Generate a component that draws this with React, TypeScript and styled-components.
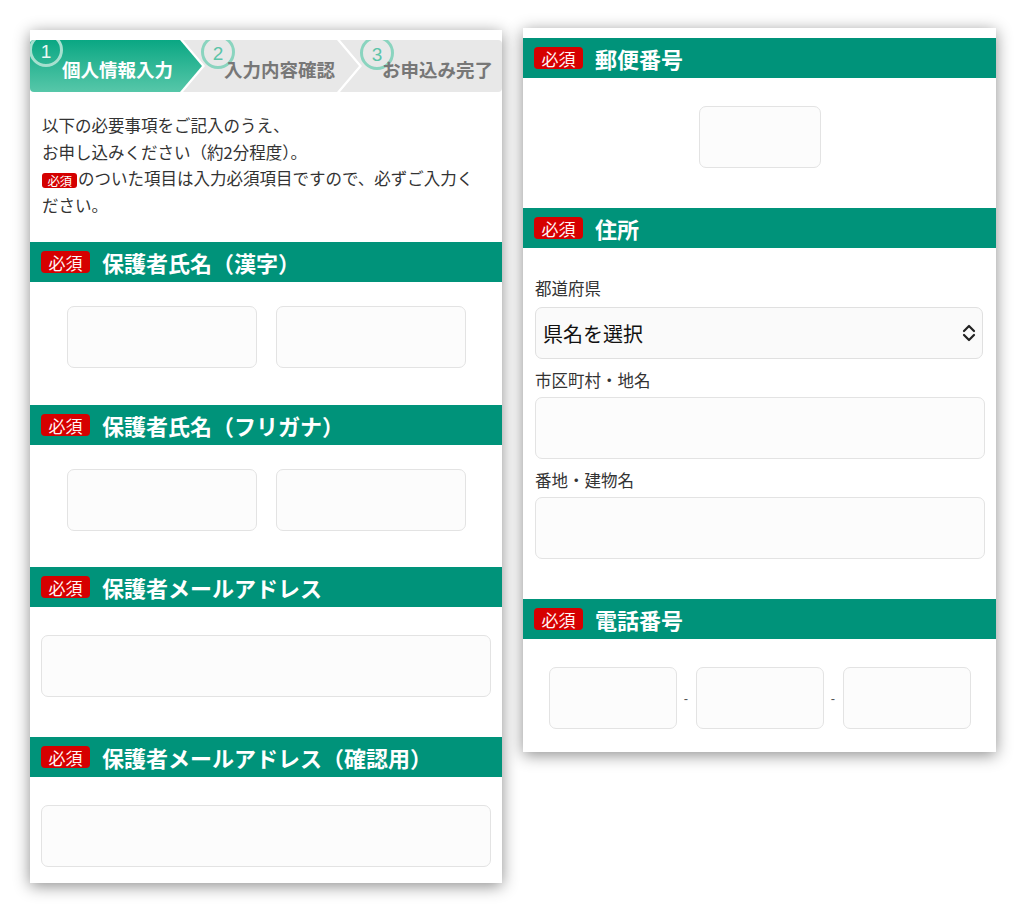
import React from "react";
import styled, { createGlobalStyle } from "styled-components";

const GlobalStyle = createGlobalStyle`
  html, body { margin: 0; padding: 0; background: #ffffff; }
  body { font-family: "Noto Sans CJK JP", "Noto Sans", sans-serif; color: #333; }
  * { box-sizing: border-box; }
`;

const Page = styled.div`
  display: flex;
  align-items: flex-start;
  gap: 21px;
  padding: 28px 0 0 30px;
  width: 1024px;
  height: 914px;
`;

const Panel = styled.div<{ $w: number; $mt?: number }>`
  width: ${(p) => p.$w}px;
  margin-top: ${(p) => p.$mt ?? 0}px;
  background: #fff;
  padding-top: 10px;
  box-shadow: 0 3px 15px rgba(0, 0, 0, 0.45);
  display: flex;
  flex-direction: column;
`;

/* ---------- step bar ---------- */
const StepBar = styled.div`
  display: flex;
  height: 52px;
  overflow: hidden;
  border-radius: 4px;
`;

type StepKind = "first" | "middle" | "last";

const clipFor = (k: StepKind) =>
  k === "first"
    ? "polygon(0 0, calc(100% - 22px) 0, 100% 50%, calc(100% - 22px) 100%, 0 100%)"
    : k === "middle"
    ? "polygon(0 0, calc(100% - 22px) 0, 100% 50%, calc(100% - 22px) 100%, 0 100%, 22px 50%)"
    : "polygon(0 0, 100% 0, 100% 100%, 0 100%, 22px 50%)";

const Step = styled.div<{ $kind: StepKind; $w?: number; $active?: boolean; $pl: number }>`
  position: relative;
  flex: ${(p) => (p.$w ? `0 0 ${p.$w}px` : "1 1 auto")};
  margin-left: ${(p) => (p.$kind === "first" ? 0 : -19)}px;
  clip-path: ${(p) => clipFor(p.$kind)};
  background: ${(p) =>
    p.$active ? "linear-gradient(180deg, #0aa783 0%, #57c7a9 100%)" : "#e8e8e8"};
  display: flex;
  align-items: center;
  padding: 5px 0 0 ${(p) => p.$pl}px;
`;

const StepLabel = styled.span<{ $active?: boolean }>`
  position: relative;
  font-size: 18.5px;
  font-weight: 700;
  white-space: nowrap;
  color: ${(p) => (p.$active ? "#ffffff" : "#777777")};
`;

const StepNum = styled.span<{ $x: number; $y: number; $active?: boolean }>`
  position: absolute;
  left: ${(p) => p.$x}px;
  top: ${(p) => p.$y}px;
  width: 34px;
  height: 34px;
  border-radius: 50%;
  border: 3px solid ${(p) => (p.$active ? "#a6e0cf" : "#8ad4bf")};
  display: flex;
  align-items: center;
  justify-content: center;
  padding-top: 4px;
  font-family: "Liberation Sans", sans-serif;
  font-size: 19px;
  font-weight: 400;
  color: ${(p) => (p.$active ? "#eaf8f3" : "#5cc4a8")};
`;

/* ---------- intro ---------- */
const Intro = styled.p`
  margin: 0;
  padding: 20px 12px 24px 12px;
  font-size: 16.5px;
  line-height: 26.5px;
  color: #333;
  white-space: nowrap;
`;

const InlineBadge = styled.span`
  display: inline-block;
  width: 35px;
  height: 15px;
  margin-right: 1px;
  vertical-align: -1px;
  border-radius: 3px;
  background: #d40000;
  color: #fff;
  font-size: 12.5px;
  line-height: 15px;
  text-align: center;
  letter-spacing: -0.5px;
`;

/* ---------- sections ---------- */
const SectionHead = styled.div`
  height: 40px;
  background: #00937a;
  display: flex;
  align-items: center;
  gap: 12px;
  padding-left: 11px;
`;

const Badge = styled.span`
  width: 49px;
  height: 22px;
  border-radius: 4px;
  background: #d60000;
  color: #fff4f4;
  font-size: 17px;
  display: flex;
  align-items: center;
  justify-content: center;
  line-height: 1;
`;

const HeadTitle = styled.h2`
  margin: 0;
  font-size: 22px;
  font-weight: 700;
  color: #fff;
  white-space: nowrap;
  line-height: 1;
`;

const SectionBody = styled.div<{ $top: number; $bottom: number }>`
  padding: ${(p) => p.$top}px 11px ${(p) => p.$bottom}px 11px;
`;

const CenterRow = styled.div`
  display: flex;
  align-items: center;
  justify-content: center;
`;

const PairRow = styled(CenterRow)`
  gap: 19px;
`;

const TextField = styled.input<{ $w?: number }>`
  display: block;
  width: ${(p) => (p.$w ? `${p.$w}px` : "100%")};
  height: 62px;
  border: 1.5px solid #e3e3e3;
  border-radius: 7px;
  background: #fcfcfc;
  padding: 0 10px;
  font-size: 18px;
  outline: none;
  flex: 0 0 auto;
`;

const Dash = styled.span`
  width: 19px;
  text-align: center;
  font-family: "Liberation Sans", sans-serif;
  font-size: 13px;
  color: #555;
`;

const AddressBody = styled.div`
  padding: 28px 11px 40px 12px;
  display: flex;
  flex-direction: column;
`;

const FieldLabel = styled.label<{ $mt: number; $mb: number }>`
  display: block;
  margin: ${(p) => p.$mt}px 0 ${(p) => p.$mb}px;
  font-size: 16.5px;
  line-height: 24px;
  color: #333;
`;

const SelectWrap = styled.div`
  position: relative;
  margin-right: 2px;
`;

const Select = styled.select`
  appearance: none;
  -webkit-appearance: none;
  display: block;
  width: 100%;
  height: 52px;
  border: 1.5px solid #e0e0e0;
  border-radius: 7px;
  background: #fafafa;
  padding: 0 30px 0 7px;
  font-family: "Noto Sans CJK JP", sans-serif;
  font-size: 20px;
  color: #111;
  outline: none;
`;

const SelectIcon = styled.svg`
  position: absolute;
  right: 7px;
  top: 50%;
  transform: translateY(-50%);
  width: 14px;
  height: 18px;
  pointer-events: none;
`;

const StepDef = [
  { kind: "first" as StepKind, w: 172, pl: 32, label: "個人情報入力", n: "1", x: -1, y: -7, active: true },
  { kind: "middle" as StepKind, w: 176, pl: 41, label: "入力内容確認", n: "2", x: 18, y: -5, active: false },
  { kind: "last" as StepKind, w: 0, pl: 42, label: "お申込み完了", n: "3", x: 20, y: -4, active: false },
];

function Head({ title }: { title: string }) {
  return (
    <SectionHead>
      <Badge>必須</Badge>
      <HeadTitle>{title}</HeadTitle>
    </SectionHead>
  );
}

export default function App() {
  return (
    <>
      <GlobalStyle />
      <Page>
        <Panel $w={472} $mt={2}>
          <StepBar>
            {StepDef.map((s) => (
              <Step key={s.n} $kind={s.kind} $w={s.w || undefined} $active={s.active} $pl={s.pl}>
                <StepNum $x={s.x} $y={s.y} $active={s.active}>
                  {s.n}
                </StepNum>
                <StepLabel $active={s.active}>{s.label}</StepLabel>
              </Step>
            ))}
          </StepBar>

          <Intro>
            以下の必要事項をご記入のうえ、
            <br />
            お申し込みください（約2分程度）。
            <br />
            <InlineBadge>必須</InlineBadge>
            のついた項目は入力必須項目ですので、必ずご入力く
            <br />
            ださい。
          </Intro>

          <Head title="保護者氏名（漢字）" />
          <SectionBody $top={24} $bottom={37}>
            <PairRow>
              <TextField $w={190} />
              <TextField $w={190} />
            </PairRow>
          </SectionBody>

          <Head title="保護者氏名（フリガナ）" />
          <SectionBody $top={24} $bottom={36}>
            <PairRow>
              <TextField $w={190} />
              <TextField $w={190} />
            </PairRow>
          </SectionBody>

          <Head title="保護者メールアドレス" />
          <SectionBody $top={28} $bottom={40}>
            <TextField />
          </SectionBody>

          <Head title="保護者メールアドレス（確認用）" />
          <SectionBody $top={28} $bottom={16}>
            <TextField />
          </SectionBody>
        </Panel>

        <Panel $w={473}>
          <Head title="郵便番号" />
          <SectionBody $top={28} $bottom={40}>
            <CenterRow>
              <TextField $w={122} />
            </CenterRow>
          </SectionBody>

          <Head title="住所" />
          <AddressBody>
            <FieldLabel $mt={0} $mb={7}>都道府県</FieldLabel>
            <SelectWrap>
              <Select defaultValue="">
                <option value="">県名を選択</option>
              </Select>
              <SelectIcon viewBox="0 0 14 18" fill="none" stroke="#222" strokeWidth="2.2" strokeLinecap="round" strokeLinejoin="round">
                <polyline points="2,7 7,2 12,7" />
                <polyline points="2,11 7,16 12,11" />
              </SelectIcon>
            </SelectWrap>
            <FieldLabel $mt={9} $mb={5}>市区町村・地名</FieldLabel>
            <TextField />
            <FieldLabel $mt={9} $mb={5}>番地・建物名</FieldLabel>
            <TextField />
          </AddressBody>

          <Head title="電話番号" />
          <SectionBody $top={28} $bottom={23}>
            <CenterRow>
              <TextField $w={128} />
              <Dash>-</Dash>
              <TextField $w={128} />
              <Dash>-</Dash>
              <TextField $w={128} />
            </CenterRow>
          </SectionBody>
        </Panel>
      </Page>
    </>
  );
}
